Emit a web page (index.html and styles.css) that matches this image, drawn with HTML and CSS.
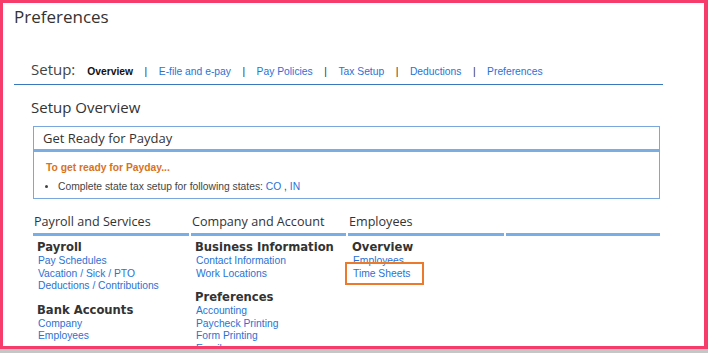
FILE: index.html
```html
<!DOCTYPE html>
<html lang="en">
<head>
    <meta charset="UTF-8">
    <meta name="viewport" content="width=device-width, initial-scale=1.0">
    <title>Preferences</title>
    <link rel="stylesheet" href="styles.css">
</head>
<body>
    <div class="frame">
        <div class="page">
            <h1 class="page-title">Preferences</h1>

            <div class="nav">
                <span class="nav-label">Setup:</span>
                <span class="nav-current">Overview</span>
                <span class="sep">|</span>
                <a href="#">E-file and e-pay</a>
                <span class="sep">|</span>
                <a href="#">Pay Policies</a>
                <span class="sep">|</span>
                <a href="#">Tax Setup</a>
                <span class="sep">|</span>
                <a href="#">Deductions</a>
                <span class="sep">|</span>
                <a href="#">Preferences</a>
            </div>

            <h2 class="section-title">Setup Overview</h2>

            <div class="ready-box">
                <div class="ready-head">Get Ready for Payday</div>
                <div class="ready-body">
                    <div class="ready-title">To get ready for Payday...</div>
                    <ul class="ready-list">
                        <li>Complete state tax setup for following states: <a href="#">CO</a> , <a href="#">IN</a></li>
                    </ul>
                </div>
            </div>

            <div class="columns">
                <div class="col">
                    <div class="col-head">Payroll and Services</div>
                    <div class="group">
                        <div class="group-title">Payroll</div>
                        <a href="#">Pay Schedules</a>
                        <a href="#">Vacation / Sick / PTO</a>
                        <a href="#">Deductions / Contributions</a>
                    </div>
                    <div class="group">
                        <div class="group-title">Bank Accounts</div>
                        <a href="#">Company</a>
                        <a href="#">Employees</a>
                    </div>
                </div>
                <div class="col">
                    <div class="col-head">Company and Account</div>
                    <div class="group">
                        <div class="group-title">Business Information</div>
                        <a href="#">Contact Information</a>
                        <a href="#">Work Locations</a>
                    </div>
                    <div class="group">
                        <div class="group-title">Preferences</div>
                        <a href="#">Accounting</a>
                        <a href="#">Paycheck Printing</a>
                        <a href="#">Form Printing</a>
                        <a href="#">Email</a>
                    </div>
                </div>
                <div class="col">
                    <div class="col-head">Employees</div>
                    <div class="group">
                        <div class="group-title">Overview</div>
                        <a href="#">Employees</a>
                        <a href="#" class="marked">Time Sheets</a>
                    </div>
                </div>
                <div class="col">
                    <div class="col-head">&nbsp;</div>
                </div>
            </div>
        </div>
    </div>
</body>
</html>
```

FILE: styles.css
```css
body {
    margin: 0;
    width: 708px;
    height: 353px;
    background: #c6c6c6;
    overflow: hidden;
}
.frame {
    width: 701px;
    height: 343px;
    border: 3px solid #f53c6a;
    border-right-width: 4px;
    background: #fff;
    overflow: hidden;
    font-family: "Liberation Sans", Arial, sans-serif;
}
.page {
    width: 649px;
    padding: 2px 0 0 11px;
}
a {
    color: #2a72d4;
    text-decoration: none;
}
.page-title {
    margin: 0;
    font-family: "Open Sans", sans-serif;
    font-size: 17px;
    font-weight: normal;
    line-height: 24px;
    color: #333;
}
/* setup tabs */
.nav {
    display: flex;
    align-items: baseline;
    margin-top: 30px;
    padding: 0 0 5px 17px;
    border-bottom: 1px solid #3a78bd;
    font-size: 10.3px;
}
.nav-label {
    font-family: "Open Sans", sans-serif;
    font-size: 15px;
    color: #444;
    margin-right: 12px;
}
.nav-current {
    color: #111;
    font-weight: bold;
}
.sep {
    margin: 0 11.5px;
    color: #333;
}
.section-title {
    margin: 12px 0 0 17px;
    font-family: "Open Sans", sans-serif;
    font-size: 15px;
    font-weight: normal;
    line-height: 20px;
    color: #333;
}
/* get ready box */
.ready-box {
    margin: 9px 0 0 19px;
    width: 625px;
    border: 1px solid #7aa8dc;
}
.ready-head {
    height: 22px;
    padding-left: 9px;
    border-bottom: 3px solid #7aaee2;
    font-family: "Open Sans", sans-serif;
    font-size: 13px;
    line-height: 22px;
    color: #333;
}
.ready-body {
    padding: 9px 0 4px 12px;
    font-size: 10.3px;
}
.ready-title {
    color: #d8721c;
    font-weight: bold;
    line-height: 14px;
}
.ready-list {
    margin: 5px 0 0;
    padding-left: 12px;
    color: #444;
    line-height: 14px;
}
/* link columns */
.columns {
    display: grid;
    grid-template-columns: 156px 155px 156px 154px;
    gap: 2px;
    margin: 14px 0 0 19px;
}
.col-head {
    padding: 0 0 2px 1px;
    border-bottom: 3px solid #78ade6;
    font-family: "Open Sans", sans-serif;
    font-size: 12.6px;
    line-height: 18px;
    color: #333;
}
.group {
    display: flex;
    flex-direction: column;
    align-items: flex-start;
    padding: 4px 0 8px 5px;
    font-size: 10.3px;
    line-height: 12.6px;
}
.group + .group {
    padding-top: 2px;
}
.group-title {
    margin-left: -1px;
    font-family: "DejaVu Sans", Verdana, sans-serif;
    font-size: 11.6px;
    font-weight: bold;
    line-height: 15px;
    color: #333;
}
.marked {
    position: relative;
}
.marked::after {
    content: "";
    position: absolute;
    left: -8px;
    right: -14px;
    top: -6px;
    bottom: -5px;
    border: 2px solid #ea7a2c;
}
```
